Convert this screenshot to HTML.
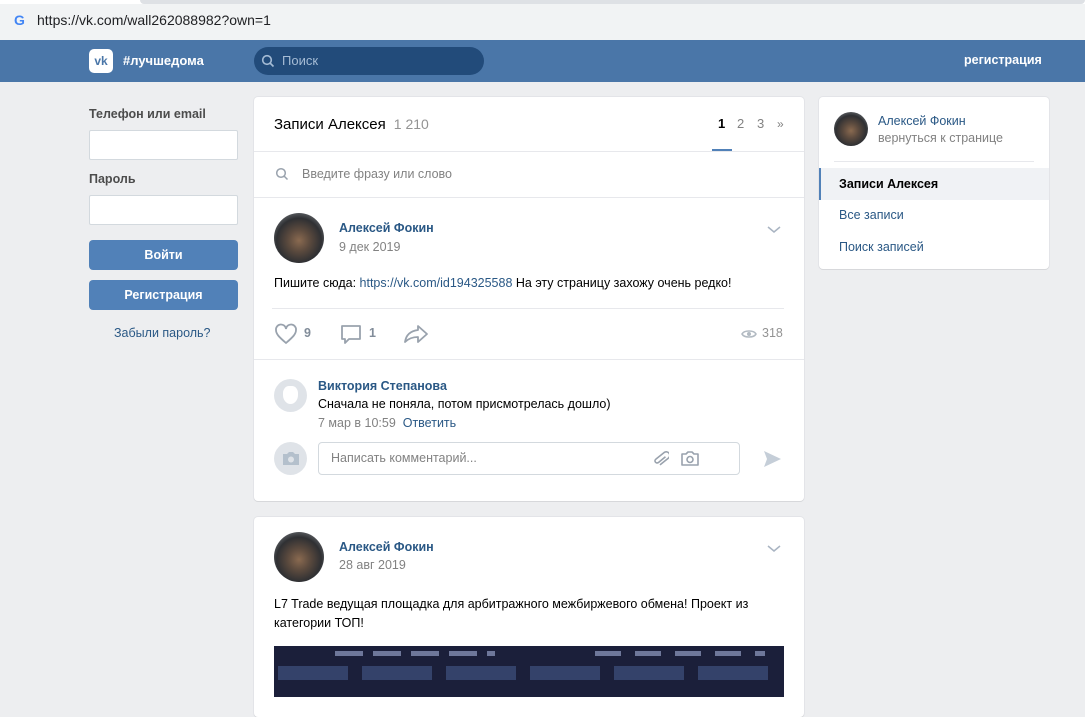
<!DOCTYPE html>
<html><head><meta charset="utf-8"><style>
*{margin:0;padding:0;box-sizing:border-box}
body{width:1085px;height:697px;overflow:hidden;background:#edeef0;font-family:"Liberation Sans","DejaVu Sans",sans-serif;font-size:12.5px;color:#000;position:relative}
.a{position:absolute}
.card{position:absolute;background:#fff;border-radius:4px;box-shadow:0 1px 0 0 #d7d8db,0 0 0 1px #e3e4e8}
.blue{color:#2a5885}
.gray{color:#828282}
.btn{position:absolute;left:89px;width:149px;height:30px;background:#5181b8;border-radius:4px;color:#fff;font-weight:bold;text-align:center;line-height:30px;font-size:12.5px}
.inp{position:absolute;left:89px;width:149px;height:30px;background:#fff;border:1px solid #d3d9de;border-radius:2px}
.av{position:absolute;border-radius:50%;background:radial-gradient(circle at 50% 55%,#8a6a50 0,#5b4a3e 30%,#2f3033 60%,#9aa0a6 100%)}
</style></head><body>
<div class="a" style="left:0;top:0;width:1085px;height:40px;background:#f1f3f4"></div>
<div class="a" style="left:0;top:0;width:1085px;height:4px;background:#fff"></div>
<div class="a" style="left:140px;top:0;width:945px;height:4px;background:#dee1e5;border-radius:0 0 4px 4px"></div>
<div class="a" style="left:14px;top:12px;font-weight:bold;font-size:14px;color:#4285f4">G</div>
<div class="a" style="left:37px;top:12px;font-size:14px;color:#202124">https://vk.com/wall262088982?own=1</div>
<div class="a" style="left:0;top:40px;width:1085px;height:42px;background:#4a76a8"></div>
<div class="a" style="left:89px;top:49px;width:24px;height:24px;background:#fff;border-radius:5px;color:#4a76a8;font-weight:bold;font-size:12px;text-align:center;line-height:24px">vk</div>
<div class="a" style="left:123px;top:53px;color:#fff;font-weight:bold;font-size:13px">#лучшедома</div>
<div class="a" style="left:254px;top:47px;width:230px;height:28px;background:#224b7a;border-radius:14px"></div>
<svg class="a" style="left:261px;top:54px" width="14" height="14" viewBox="0 0 14 14"><circle cx="6" cy="6" r="4.3" fill="none" stroke="#a6bcd5" stroke-width="1.6"/><path d="M9 9l3.5 3.5" stroke="#a6bcd5" stroke-width="1.6"/></svg>
<div class="a" style="left:282px;top:53px;color:#a6bcd5;font-size:13px">Поиск</div>
<div class="a" style="left:964px;top:53px;color:#fff;font-weight:bold;font-size:12.5px">регистрация</div>

<div class="a" style="left:89px;top:107px;font-weight:bold;color:#4c4c4c;font-size:12.5px">Телефон или email</div>
<div class="inp" style="top:130px"></div>
<div class="a" style="left:89px;top:172px;font-weight:bold;color:#4c4c4c;font-size:12.5px">Пароль</div>
<div class="inp" style="top:195px"></div>
<div class="btn" style="top:240px">Войти</div>
<div class="btn" style="top:280px">Регистрация</div>
<div class="a blue" style="left:114px;top:326px;font-size:12.5px">Забыли пароль?</div>

<div class="card" style="left:254px;top:97px;width:550px;height:404px"></div>
<div class="a" style="left:274px;top:116px;font-size:15px;color:#000">Записи Алексея <span style="color:#939393;font-size:14px">&nbsp;1 210</span></div>
<div class="a" style="left:718px;top:116px;font-size:13px;font-weight:bold">1</div>
<div class="a gray" style="left:737px;top:116px;font-size:13px">2</div>
<div class="a gray" style="left:757px;top:116px;font-size:13px">3</div>
<div class="a gray" style="left:777px;top:117px;font-size:12px">»</div>
<div class="a" style="left:712px;top:149px;width:20px;height:2px;background:#5181b8"></div>
<div class="a" style="left:254px;top:151px;width:550px;height:1px;background:#e7e8ec"></div>
<svg class="a" style="left:275px;top:167px" width="14" height="14" viewBox="0 0 14 14"><circle cx="6" cy="6" r="4.3" fill="none" stroke="#99a2ad" stroke-width="1.5"/><path d="M9 9l3.5 3.5" stroke="#99a2ad" stroke-width="1.5"/></svg>
<div class="a" style="left:302px;top:167px;color:#828282">Введите фразу или слово</div>
<div class="a" style="left:254px;top:197px;width:550px;height:1px;background:#e7e8ec"></div>

<div class="av" style="left:274px;top:213px;width:50px;height:50px"></div>
<div class="a blue" style="left:339px;top:221px;font-weight:bold;font-size:12.5px">Алексей Фокин</div>
<div class="a gray" style="left:339px;top:240px;font-size:12.5px">9 дек 2019</div>
<svg class="a" style="left:767px;top:226px" width="14" height="8"><path d="M1 1l6 5 6-5" fill="none" stroke="#a9b4c2" stroke-width="1.5"/></svg>
<div class="a" style="left:274px;top:276px">Пишите сюда: <span class="blue">https://vk.com/id194325588</span> На эту страницу захожу очень редко!</div>
<div class="a" style="left:272px;top:308px;width:512px;height:1px;background:#e7e8ec"></div>
<svg class="a" style="left:274px;top:323px" width="24" height="22" viewBox="0 0 24 22"><path d="M12 20C5 14 2 11 2 7a5 5 0 0 1 10-1 5 5 0 0 1 10 1c0 4-3 7-10 13z" fill="none" stroke="#99a2ad" stroke-width="1.8"/></svg>
<div class="a" style="left:304px;top:326px;font-weight:bold;color:#818c99">9</div>
<svg class="a" style="left:340px;top:324px" width="22" height="22" viewBox="0 0 22 22"><path d="M2 2h18v13H9l-4 4v-4H2z" fill="none" stroke="#99a2ad" stroke-width="1.8" stroke-linejoin="round"/></svg>
<div class="a" style="left:369px;top:326px;font-weight:bold;color:#818c99">1</div>
<svg class="a" style="left:403px;top:324px" width="26" height="20" viewBox="0 0 26 20"><path d="M15 2l9 8-9 8v-5C9 13 5 15 2 18c1-7 5-11 13-12z" fill="none" stroke="#99a2ad" stroke-width="1.8" stroke-linejoin="round"/></svg>
<svg class="a" style="left:741px;top:328px" width="16" height="12" viewBox="0 0 16 12"><path d="M1 6C3 2 13 2 15 6 13 10 3 10 1 6z" fill="none" stroke="#b2bac2" stroke-width="1.6"/><circle cx="8" cy="6" r="2" fill="#b2bac2"/></svg>
<div class="a" style="left:762px;top:326px;color:#939393">318</div>
<div class="a" style="left:254px;top:359px;width:550px;height:1px;background:#e7e8ec"></div>

<div class="a" style="left:274px;top:379px;width:33px;height:33px;border-radius:50%;background:#dfe3e8"></div>
<div class="a" style="left:283px;top:386px;width:15px;height:18px;border-radius:40% 40% 50% 50%;background:#fff"></div>
<div class="a blue" style="left:318px;top:379px;font-weight:bold;font-size:12.5px">Виктория Степанова</div>
<div class="a" style="left:318px;top:397px">Сначала не поняла, потом присмотрелась дошло)</div>
<div class="a gray" style="left:318px;top:416px;font-size:12.5px">7 мар в 10:59 <span class="blue">&nbsp;Ответить</span></div>
<div class="a" style="left:274px;top:442px;width:33px;height:33px;border-radius:50%;background:#dfe3e8"></div>
<svg class="a" style="left:281px;top:450px" width="20" height="17" viewBox="0 0 20 17"><path d="M2 4h4l2-2h4l2 2h4v11H2z" fill="#b4c0cc"/><circle cx="10" cy="9.5" r="3" fill="#dfe3e8"/></svg>
<div class="a" style="left:318px;top:442px;width:422px;height:33px;border:1px solid #d3d9de;border-radius:4px;background:#fff"></div>
<div class="a" style="left:331px;top:451px;color:#828282">Написать комментарий...</div>
<svg class="a" style="left:653px;top:449px" width="16" height="20" viewBox="0 0 16 20"><path d="M12 7l-6 7a2 2 0 0 1-3-3l7-8a3.5 3.5 0 0 1 5 5l-7 8" fill="none" stroke="#99a2ad" stroke-width="1.6" transform="rotate(10 8 10)"/></svg>
<svg class="a" style="left:680px;top:450px" width="20" height="17" viewBox="0 0 20 17"><path d="M2 4h4l2-2h4l2 2h4v11H2z" fill="none" stroke="#99a2ad" stroke-width="1.6" stroke-linejoin="round"/><circle cx="10" cy="9.5" r="3" fill="none" stroke="#99a2ad" stroke-width="1.6"/></svg>
<svg class="a" style="left:762px;top:449px" width="20" height="20" viewBox="0 0 20 20"><path d="M2 2l17 8-17 8 3-8z" fill="#c5ced8"/></svg>

<div class="card" style="left:254px;top:517px;width:550px;height:200px"></div>
<div class="av" style="left:274px;top:532px;width:50px;height:50px"></div>
<div class="a blue" style="left:339px;top:540px;font-weight:bold;font-size:12.5px">Алексей Фокин</div>
<div class="a gray" style="left:339px;top:558px;font-size:12.5px">28 авг 2019</div>
<svg class="a" style="left:767px;top:545px" width="14" height="8"><path d="M1 1l6 5 6-5" fill="none" stroke="#a9b4c2" stroke-width="1.5"/></svg>
<div class="a" style="left:274px;top:595px;line-height:19px;width:510px">L7 Trade ведущая площадка для арбитражного межбиржевого обмена! Проект из категории ТОП!</div>
<div class="a" style="left:274px;top:646px;width:510px;height:51px;background:#1b1f3a"></div>
<div class="a" style="left:278px;top:666px;width:504px;height:14px;background:repeating-linear-gradient(90deg,#34426a 0 70px,#1b1f3a 70px 84px)"></div>
<div class="a" style="left:335px;top:651px;width:160px;height:5px;background:repeating-linear-gradient(90deg,#6e779a 0 28px,#1b1f3a 28px 38px)"></div>
<div class="a" style="left:595px;top:651px;width:170px;height:5px;background:repeating-linear-gradient(90deg,#6e779a 0 26px,#1b1f3a 26px 40px)"></div>

<div class="card" style="left:819px;top:97px;width:230px;height:172px"></div>
<div class="av" style="left:834px;top:112px;width:34px;height:34px"></div>
<div class="a blue" style="left:878px;top:114px;font-size:12.5px">Алексей Фокин</div>
<div class="a gray" style="left:878px;top:131px;font-size:12.5px">вернуться к странице</div>
<div class="a" style="left:834px;top:161px;width:200px;height:1px;background:#e7e8ec"></div>
<div class="a" style="left:819px;top:168px;width:230px;height:32px;background:#f0f2f5;border-left:2px solid #5181b8"></div>
<div class="a" style="left:839px;top:177px;font-weight:bold;font-size:12.5px">Записи Алексея</div>
<div class="a" style="left:839px;top:208px;color:#2a5885;font-size:12.5px">Все записи</div>
<div class="a" style="left:839px;top:240px;color:#2a5885;font-size:12.5px">Поиск записей</div>
</body></html>
